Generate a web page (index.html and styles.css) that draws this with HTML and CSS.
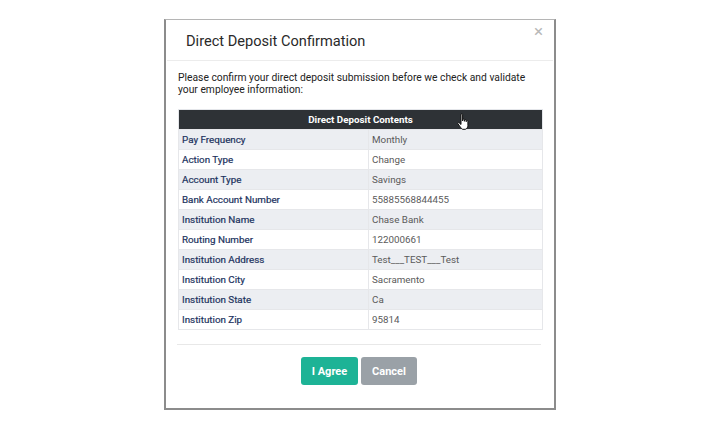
FILE: index.html
```html
<!DOCTYPE html>
<html lang="en">
<head>
    <meta charset="UTF-8">
    <meta name="viewport" content="width=device-width, initial-scale=1.0">
    <title>Direct Deposit Confirmation</title>
    <link rel="stylesheet" href="styles.css">
</head>
<body>
    <div class="modal">
        <div class="modal-header">
            <h2>Direct Deposit Confirmation</h2>
            <span class="close">&times;</span>
        </div>

        <div class="modal-body">
            <p>Please confirm your direct deposit submission before we check and validate your employee information:</p>

            <div class="table-wrap">
                <table class="deposit-table">
                    <thead>
                        <tr><th colspan="2">Direct Deposit Contents</th></tr>
                    </thead>
                    <tbody>
                        <tr><td class="label">Pay Frequency</td><td>Monthly</td></tr>
                        <tr><td class="label">Action Type</td><td>Change</td></tr>
                        <tr><td class="label">Account Type</td><td>Savings</td></tr>
                        <tr><td class="label">Bank Account Number</td><td>55885568844455</td></tr>
                        <tr><td class="label">Institution Name</td><td>Chase Bank</td></tr>
                        <tr><td class="label">Routing Number</td><td>122000661</td></tr>
                        <tr><td class="label">Institution Address</td><td>Test___TEST___Test</td></tr>
                        <tr><td class="label">Institution City</td><td>Sacramento</td></tr>
                        <tr><td class="label">Institution State</td><td>Ca</td></tr>
                        <tr><td class="label">Institution Zip</td><td>95814</td></tr>
                    </tbody>
                </table>

                <!-- puntero del mouse sobre la cabecera -->
                <svg class="cursor" width="14" height="18" viewBox="0 0 14 18">
                    <path d="M4 1.5c0-.8 1.6-.8 1.6 0V8l.3-1.4c.2-.8 1.5-.7 1.5.1V8.3l.3-1c.2-.8 1.5-.7 1.5.1v1.3l.3-.7c.3-.7 1.4-.5 1.4.3v4.2c0 1.8-1 3.2-2.6 3.8H5.6C4.4 15.8 3.4 14 2 12.2L.9 10.6c-.5-.8.5-1.6 1.2-.9L4 11.5z" fill="#fff" stroke="#111" stroke-width="1"/>
                </svg>
            </div>
        </div>

        <div class="modal-footer">
            <button class="btn btn-agree">I Agree</button>
            <button class="btn btn-cancel">Cancel</button>
        </div>
    </div>
</body>
</html>
```

FILE: styles.css
```css
* {
    box-sizing: border-box;
    font-family: Roboto, 'Liberation Sans', Arial, sans-serif;
}

body {
    margin: 0;
    padding: 0;
    background-color: #fff;
    color: #333;
}

.modal {
    width: 392px;
    height: 391px;
    margin: 19px 0 0 164px;
    background-color: #fff;
    border: 2px solid #8c8c8c;
    border-top: 1px solid #b5b5b5;
    display: flex;
    flex-direction: column;
}

.modal-header {
    position: relative;
    height: 41px;
    padding: 12px 0 0 19px;
    border-bottom: 1px solid #ececec;
    margin: 0 1px;
}

.modal-header h2 {
    margin: 0;
    font-size: 14.6px;
    font-weight: 400;
    line-height: 18px;
    color: #2a2a2a;
}

.close {
    position: absolute;
    top: 2px;
    right: 10px;
    font-size: 17px;
    color: #b8b8b8;
    line-height: 18px;
}

.modal-body {
    padding: 11px 11px 0 12px;
}

.modal-body p {
    margin: 0 0 13px;
    font-size: 10.3px;
    line-height: 12px;
    color: #222;
}

.table-wrap {
    position: relative;
}

.deposit-table {
    width: 100%;
    border-collapse: collapse;
    font-size: 9.8px;
    border: 1px solid #e4e6ea;
}

.deposit-table th {
    height: 20px;
    background-color: #2e3236;
    color: #fff;
    font-weight: 700;
    text-align: center;
    padding: 0;
}

.deposit-table td {
    height: 20px;
    padding: 0 4px 0 3px;
    color: #5a5a5a;
    border: 1px solid #e6e7ea;
}

.deposit-table td.label {
    width: 190px;
    color: #1d3360;
    -webkit-text-stroke: 0.2px #1d3360;
}

.deposit-table tbody tr:nth-child(odd) td {
    background-color: #eceef2;
}

.cursor {
    position: absolute;
    left: 279px;
    top: 4px;
}

.modal-footer {
    margin: 14px 13px 0 11px;
    padding-top: 12px;
    border-top: 1px solid #e8e8e8;
    display: flex;
    justify-content: center;
    gap: 3px;
}

.btn {
    border: none;
    border-radius: 3px;
    color: #fff;
    font-size: 11px;
    font-weight: 700;
    height: 28px;
    padding: 0;
    cursor: pointer;
}

.btn-agree {
    width: 57px;
    background-color: #1db396;
}

.btn-cancel {
    width: 56px;
    background-color: #9aa1a7;
}
```
